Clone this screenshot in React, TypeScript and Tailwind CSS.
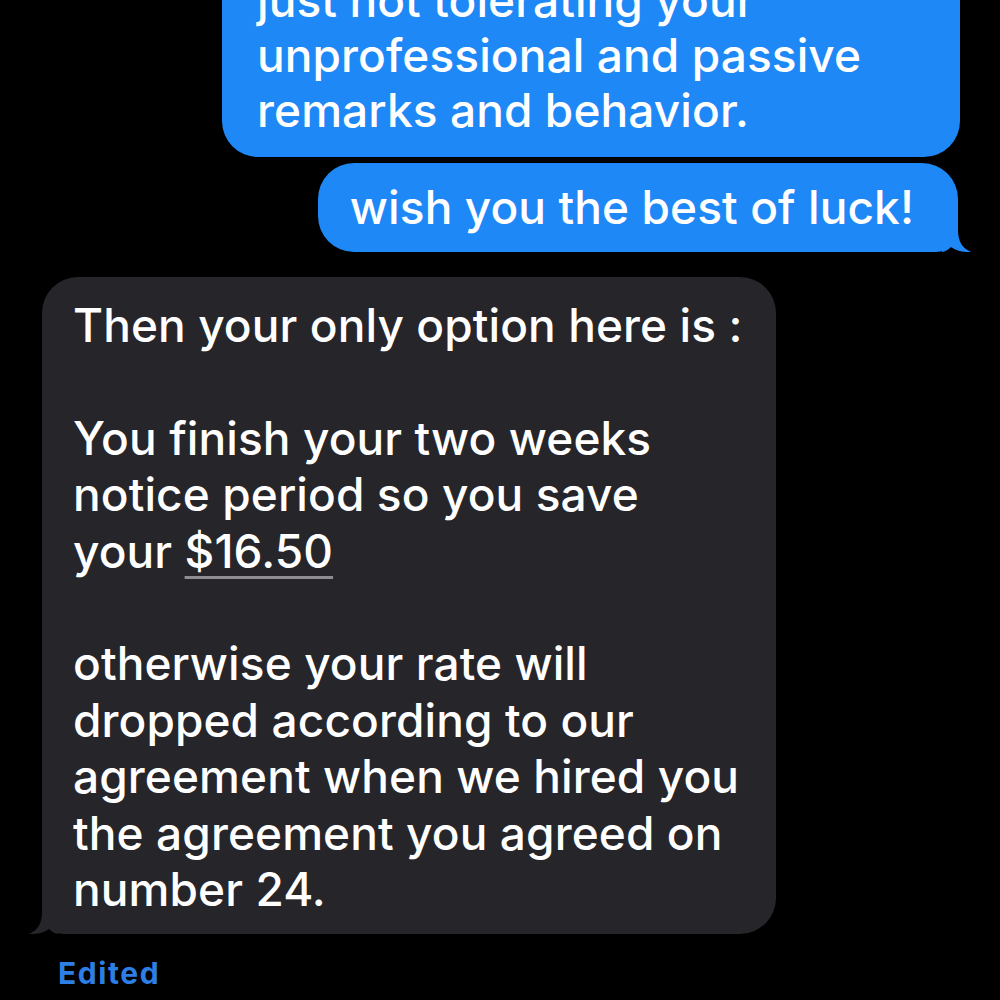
import { ReactNode } from "react";

const font = { fontFamily: "Inter, 'Liberation Sans', sans-serif" };

function BlueBubble({ children, className }: { children: ReactNode; className?: string }) {
  return (
    <div
      className={`relative bg-[#1f88f7] text-white text-[46px] font-medium leading-[55px] tracking-[0.1px] rounded-[36px] ${className ?? ""}`}
    >
      {children}
    </div>
  );
}

function RightTail() {
  return (
    <svg className="absolute right-[-14px] bottom-0" width="30" height="30" viewBox="0 0 30 30">
      <path d="M0 0 H16 V8 C16 19 20 26 29 30 C21 30.5 14 28.5 9 25 C6 28 3 29.5 0 30 Z" fill="#1f88f7" />
    </svg>
  );
}

function LeftTail() {
  return (
    <svg className="absolute left-[-14px] bottom-0" width="30" height="30" viewBox="0 0 30 30">
      <path d="M30 0 H14 V8 C14 19 10 26 1 30 C9 30.5 16 28.5 21 25 C24 28 27 29.5 30 30 Z" fill="#26252a" />
    </svg>
  );
}

export default function App() {
  return (
    <div className="w-[1000px] h-[1000px] bg-black overflow-hidden flex flex-col" style={font}>
      <div className="flex flex-col items-end pr-[40px] gap-[6px] mt-[-45px]">
        <BlueBubble className="w-[738px] pl-[35px] pr-[20px] pt-[18px] pb-[19px]">
          <p>just not tolerating your</p>
          <p>unprofessional and passive</p>
          <p>remarks and behavior.</p>
        </BlueBubble>
        <BlueBubble className="mr-[2px] pl-[32px] pr-[44px] pt-[17px] pb-[17px] rounded-br-[22px]">
          <p>wish you the best of luck!</p>
          <RightTail />
        </BlueBubble>
      </div>

      <div className="pl-[42px] mt-[25px]">
        <div className="relative w-[734px] bg-[#26252a] text-white text-[46px] font-medium leading-[56.4px] tracking-[0.1px] rounded-[36px] rounded-bl-[22px] pl-[31px] pr-[4px] pt-[20px] pb-[17px]">
          <p>Then your only option here is :</p>
          <p>&nbsp;</p>
          <p>You finish your two weeks</p>
          <p>notice period so you save</p>
          <p>
            your{" "}
            <span className="underline decoration-[#8d8d92] decoration-[3px] underline-offset-[8px]">$16.50</span>
          </p>
          <p>&nbsp;</p>
          <p>otherwise your rate will</p>
          <p>dropped according to our</p>
          <p>agreement when we hired you</p>
          <p>the agreement you agreed on</p>
          <p>number 24.</p>
          <LeftTail />
        </div>
      </div>

      <div className="pl-[58px] mt-[17px] text-[30px] font-bold tracking-[1.6px] text-[#2d7fe6]">Edited</div>
    </div>
  );
}
